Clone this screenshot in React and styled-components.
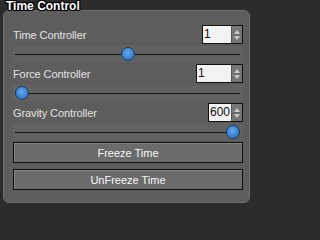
import React from "react";
import styled, { createGlobalStyle } from "styled-components";

const Global = createGlobalStyle`
  html, body { margin: 0; padding: 0; background: #2c2c2c; }
  body { font-family: "Liberation Sans", Arial, sans-serif; }
`;

const Screen = styled.div`
  width: 256px;
  height: 208px;
  background: #2c2c2c;
  display: flex;
  flex-direction: column;
  overflow: hidden;
`;

const Title = styled.div`
  position: relative;
  z-index: 1;
  height: 10px;
  padding-left: 6px;
  font: bold 12px/12px "Liberation Sans", Arial, sans-serif;
  color: #ffffff;
  text-shadow: 1px 0 0 #000, -1px 0 0 #000, 0 1px 0 #000, 0 -1px 0 #000,
    1px 1px 0 #000, -1px -1px 0 #000, 1px -1px 0 #000, -1px 1px 0 #000;
`;

const Panel = styled.div`
  margin: 0 6px 0 3px;
  height: 193px;
  box-sizing: border-box;
  background: #5d5d5d;
  border: 1px solid #6e6e6e;
  border-radius: 6px;
  padding: 14px 6px 0 9px;
  display: flex;
  flex-direction: column;
`;

const Row = styled.div`
  height: 19px;
  display: flex;
  align-items: center;
  justify-content: space-between;
`;

const Label = styled.span`
  font-size: 11px;
  color: #e2e2e2;
  letter-spacing: -0.1px;
`;

const Spinner = styled.div`
  width: ${(p) => p.$w}px;
  height: 19px;
  box-sizing: border-box;
  border: 1px solid #111;
  display: flex;
  background: #f2f2f2;
`;

const SpinValue = styled.div`
  flex: 1;
  font-size: 12px;
  line-height: 17px;
  color: #111;
  padding-left: 1px;
  white-space: nowrap;
`;

const SpinArrows = styled.div`
  width: 10px;
  background: #767676;
  border-left: 1px solid #555;
  display: flex;
  align-items: center;
  justify-content: center;
`;

const SliderArea = styled.div`
  height: 20px;
  display: flex;
  align-items: center;
`;

const SliderBand = styled.div`
  flex: 1;
  height: 16px;
  background: #626262;
  position: relative;
  display: flex;
  align-items: center;
  padding: 0 3px 0 2px;
`;

const Track = styled.div`
  flex: 1;
  height: 1px;
  background: #151515;
  position: relative;
`;

const Thumb = styled.div`
  position: absolute;
  top: -7px;
  width: 14px;
  height: 14px;
  box-sizing: border-box;
  border-radius: 50%;
  border: 1px solid #1b3b63;
  background: radial-gradient(circle at 45% 40%, #6aa8ec 0%, #3c84d4 55%, #2a66b0 100%);
`;

const Buttons = styled.div`
  display: flex;
  flex-direction: column;
  gap: 6px;
`;

const Button = styled.button`
  height: 21px;
  box-sizing: border-box;
  border: 1px solid #0e0e0e;
  background: #6b6b6b;
  box-shadow: inset 1px 1px 0 #858585;
  color: #f8f8f8;
  font: 11px "Liberation Sans", Arial, sans-serif;
  padding: 0;
  margin: 0;
`;

function Arrows() {
  return (
    <svg width="8" height="14" viewBox="0 0 8 14">
      <polygon points="1,6 7,6 4,2" fill="#c9c9c9" />
      <line x1="0" y1="7" x2="8" y2="7" stroke="#5e5e5e" strokeWidth="1" />
      <polygon points="1,8 7,8 4,12" fill="#c9c9c9" />
    </svg>
  );
}

function Control({ label, value, width, pct }) {
  return (
    <>
      <Row>
        <Label>{label}</Label>
        <Spinner $w={width}>
          <SpinValue>{value}</SpinValue>
          <SpinArrows>
            <Arrows />
          </SpinArrows>
        </Spinner>
      </Row>
      <SliderArea>
        <SliderBand>
          <Track>
            <Thumb style={{ left: `calc(${pct} * (100% - 14px))` }} />
          </Track>
        </SliderBand>
      </SliderArea>
    </>
  );
}

export default function App() {
  return (
    <Screen>
      <Global />
      <Title>Time Control</Title>
      <Panel>
        <Control label="Time Controller" value="1" width={41} pct={0.5} />
        <Control label="Force Controller" value="1" width={47} pct={0} />
        <Control label="Gravity Controller" value="600" width={35} pct={1} />
        <Buttons>
          <Button>Freeze Time</Button>
          <Button>UnFreeze Time</Button>
        </Buttons>
      </Panel>
    </Screen>
  );
}
